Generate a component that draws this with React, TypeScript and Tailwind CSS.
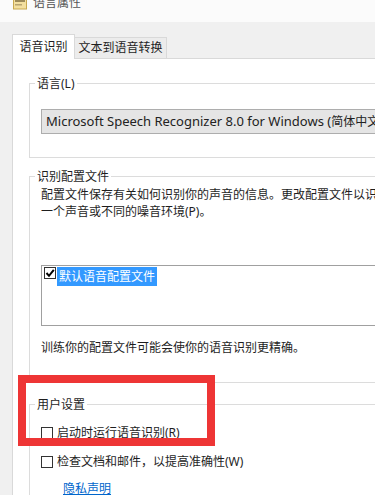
import React from "react";

const font = { fontFamily: '"Noto Sans", "Noto Sans CJK SC", sans-serif' };

function Group({ label, children, className }: { label: string; children: React.ReactNode; className: string }) {
  return (
    <fieldset className={`border-l border-t border-b border-[#dcdcdc] mr-[-20px] pl-[5px] ${className}`}>
      <legend className="px-[2px] text-[12px] leading-[17px] text-[#1e1e1e]">{label}</legend>
      <div className="pl-[6px]">{children}</div>
    </fieldset>
  );
}

function Box({ checked }: { checked?: boolean }) {
  return (
    <div className="w-[12px] h-[12px] border border-[#333] bg-white shrink-0 flex items-center justify-center">
      {checked && (
        <svg width="10" height="10" viewBox="0 0 10 10">
          <path d="M1.5 5 L4 7.8 L8.8 1.8" fill="none" stroke="#000" strokeWidth="2" />
        </svg>
      )}
    </div>
  );
}

export default function App() {
  return (
    <div className="w-[375px] h-[495px] overflow-hidden bg-[#f0f0f0] relative flex flex-col" style={font}>
      {/* title bar */}
      <div className="h-[22px] bg-[#fbfbfb] flex items-start pl-[13px] gap-[6px] shrink-0 overflow-hidden">
        <svg width="14" height="12" viewBox="0 0 14 12" className="mt-[-2px]">
          <rect x="0.5" y="0" width="13" height="11" fill="#f3dfa0" stroke="#c8a850" />
          <rect x="2" y="2" width="10" height="2" fill="#9c8a5a" />
          <rect x="2" y="6" width="7" height="1.5" fill="#b8a470" />
        </svg>
        <div className="text-[12px] leading-[12px] mt-[-3px] text-[#555]">语言属性</div>
      </div>
      {/* tabs */}
      <div className="h-[36px] flex items-end pl-[12px] shrink-0">
        <div className="h-[25px] w-[63px] bg-white border border-b-0 border-[#d9d9d9] mb-[-1px] relative z-10 flex items-center justify-center text-[12px] text-[#1e1e1e]">
          语音识别
        </div>
        <div className="h-[21px] w-[92px] bg-[#ececec] border border-l-0 border-b-0 border-[#d9d9d9] flex items-center justify-center text-[12px] text-[#1e1e1e]">
          文本到语音转换
        </div>
      </div>
      {/* panel */}
      <div className="flex-1 ml-[12px] bg-white border-t border-l border-[#d9d9d9] pl-[16px] text-[12px] leading-[17px] text-[#1e1e1e]">
        <Group label="语言(L)" className="mt-[16px] pb-[23px]">
          <div className="mt-[17px] h-[25px] border border-[#adadad] bg-[#e5e5e5] flex items-center pl-[4px] whitespace-nowrap text-[#222] mr-[-60px]">
            <span className="text-[13px]">Microsoft Speech Recognizer 8.0 for Windows (</span>
            <span className="text-[12px]">简体中文 - 中国)</span>
          </div>
        </Group>
        <Group label="识别配置文件" className="mt-[10px] pb-[26px]">
          <div className="mt-[1px] whitespace-nowrap">配置文件保存有关如何识别你的声音的信息。更改配置文件以识别</div>
          <div className="whitespace-nowrap">一个声音或不同的噪音环境(P)。</div>
          <div className="mt-[45px] h-[61px] border border-[#a0a0a0] pl-[2px] pt-[1px] flex items-start">
            <Box checked />
            <div className="ml-[1px] h-[19px] bg-[#3399ff] text-white px-[2px] flex items-center">默认语音配置文件</div>
          </div>
          <div className="mt-[13px] whitespace-nowrap">训练你的配置文件可能会使你的语音识别更精确。</div>
        </Group>
        <Group label="用户设置" className="mt-[13px] pb-[20px]">
          <div className="mt-[11px] flex items-center gap-[4px] h-[17px]">
            <Box />
            <span>启动时运行语音识别(R)</span>
          </div>
          <div className="mt-[12px] flex items-center gap-[4px] h-[17px] whitespace-nowrap">
            <Box />
            <span>检查文档和邮件，以提高准确性(W)</span>
          </div>
          <div className="mt-[10px] pl-[22px]">
            <span className="text-[#0066cc] underline">隐私声明</span>
          </div>
        </Group>
      </div>
      {/* red highlight */}
      <div className="absolute left-[18px] top-[375px] w-[197px] h-[71px] border-[8px] border-[#ee3535]" />
    </div>
  );
}
